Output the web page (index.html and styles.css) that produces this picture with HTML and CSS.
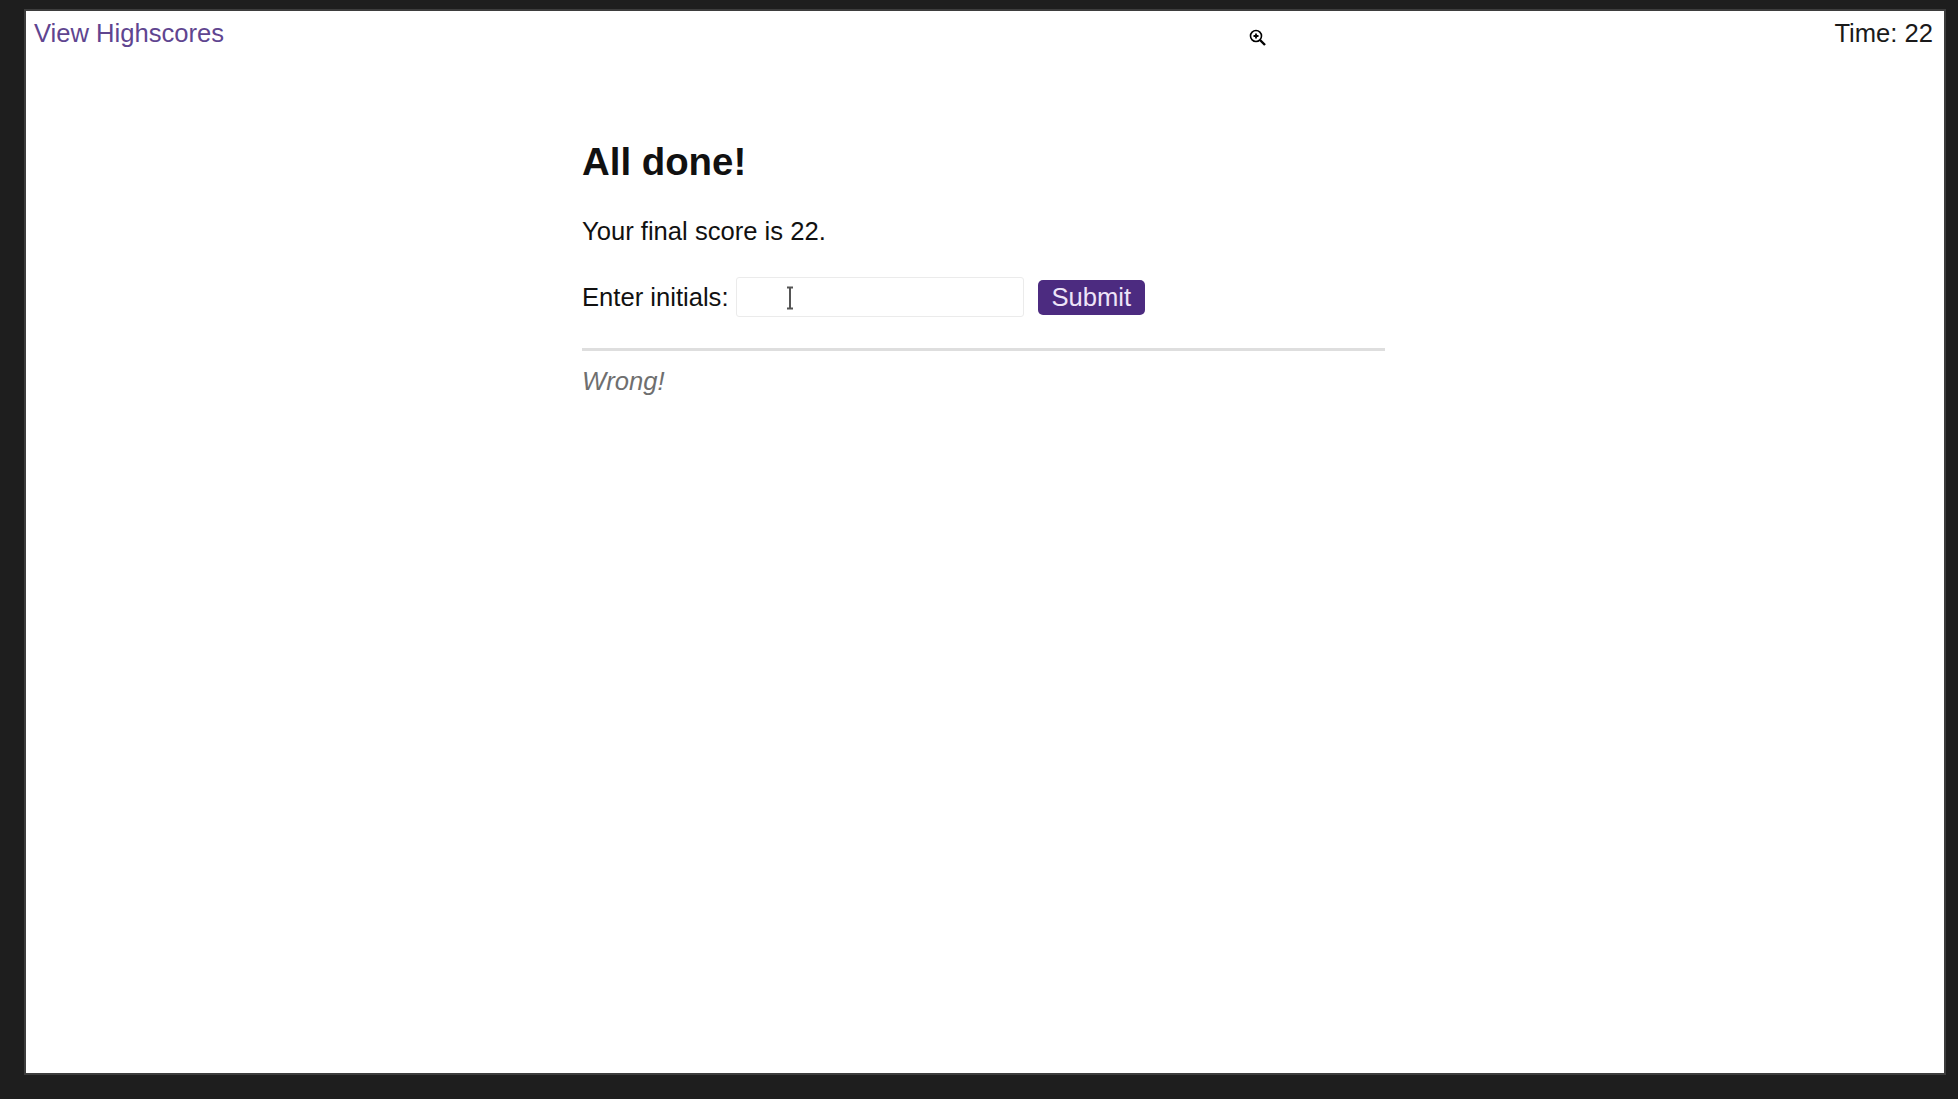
FILE: index.html
```html
<!DOCTYPE html>
<html lang="en">
<head>
<meta charset="utf-8">
<title>Quiz</title>
<link rel="stylesheet" href="styles.css">
</head>
<body>
<div class="frame">
  <header class="topbar">
    <a class="highscores" href="#">View Highscores</a>
    <span class="timer">Time: 22</span>
  </header>
  <main class="quiz">
    <h2 class="title">All done!</h2>
    <p class="score">Your final score is 22.</p>
    <form class="initials-form">
      <label class="initials-label" for="initials">Enter initials:</label>
      <input class="initials-input" id="initials" type="text">
      <button class="submit-btn" type="button">Submit</button>
    </form>
    <hr class="divider">
    <p class="feedback">Wrong!</p>
  </main>
  <svg class="cursor-zoom" width="18" height="18" viewBox="0 0 18 18">
    <circle cx="7" cy="7" r="5.5" fill="#fff" stroke="#000" stroke-width="1.6"/>
    <path d="M4.5 7h5M7 4.5v5" stroke="#000" stroke-width="1.8"/>
    <path d="M11 11l5 5" stroke="#000" stroke-width="2.4"/>
  </svg>
  <svg class="cursor-ibeam" width="10" height="24" viewBox="0 0 10 24">
    <path d="M2 1.5h6M5 1.5v21M2 22.5h6" stroke="#555" stroke-width="2"/>
  </svg>
</div>
</body>
</html>
```

FILE: styles.css
```css
html, body {
  margin: 0;
  padding: 0;
}

body {
  background: #1e1e1e;
  padding: 9px 12px 24px 24px;
  font-family: "Liberation Sans", Arial, Helvetica, sans-serif;
  color: #111;
}

.frame {
  position: relative;
  box-sizing: border-box;
  width: 1922px;
  height: 1066px;
  background: #fff;
  border: 2px solid #3d3d3d;
}

.topbar {
  display: flex;
  justify-content: space-between;
  align-items: center;
  padding: 7px 11px 0 8px;
  font-size: 25.6px;
  line-height: 30px;
}

.highscores {
  color: #5f4590;
  text-decoration: none;
}

.timer {
  color: #1a1a1a;
}

.quiz {
  width: 803px;
  margin: 0 0 0 556px;
  padding-top: 92px;
  font-size: 25.6px;
}

.title {
  margin: 0;
  font-size: 38.4px;
  line-height: 44px;
  font-weight: bold;
  color: #111;
}

.score {
  margin: 32px 0 0;
  line-height: 30px;
}

.initials-form {
  display: flex;
  align-items: center;
  margin-top: 31px;
}

.initials-label {
  line-height: 30px;
  margin-right: 7px;
}

.initials-input {
  box-sizing: border-box;
  width: 288px;
  height: 40px;
  margin: 0 14px 0 0;
  padding: 0 8px;
  border: 1px solid #ebebeb;
  border-radius: 3px;
  background: #fff;
  font: inherit;
}

.submit-btn {
  box-sizing: border-box;
  height: 35px;
  padding: 0 14px;
  border: none;
  border-radius: 5px;
  background: #4c2b80;
  color: #eee4f8;
  font-family: "Liberation Sans", Arial, Helvetica, sans-serif;
  font-size: 25.6px;
  line-height: 35px;
}

.divider {
  margin: 31px 0 0;
  height: 0;
  border: none;
  border-top: 3px solid #dedede;
}

.feedback {
  margin: 15px 0 0;
  line-height: 30px;
  font-style: italic;
  color: #6f6f6f;
}

.cursor-zoom {
  position: absolute;
  left: 1223px;
  top: 18px;
}

.cursor-ibeam {
  position: absolute;
  left: 759px;
  top: 275px;
}
```
